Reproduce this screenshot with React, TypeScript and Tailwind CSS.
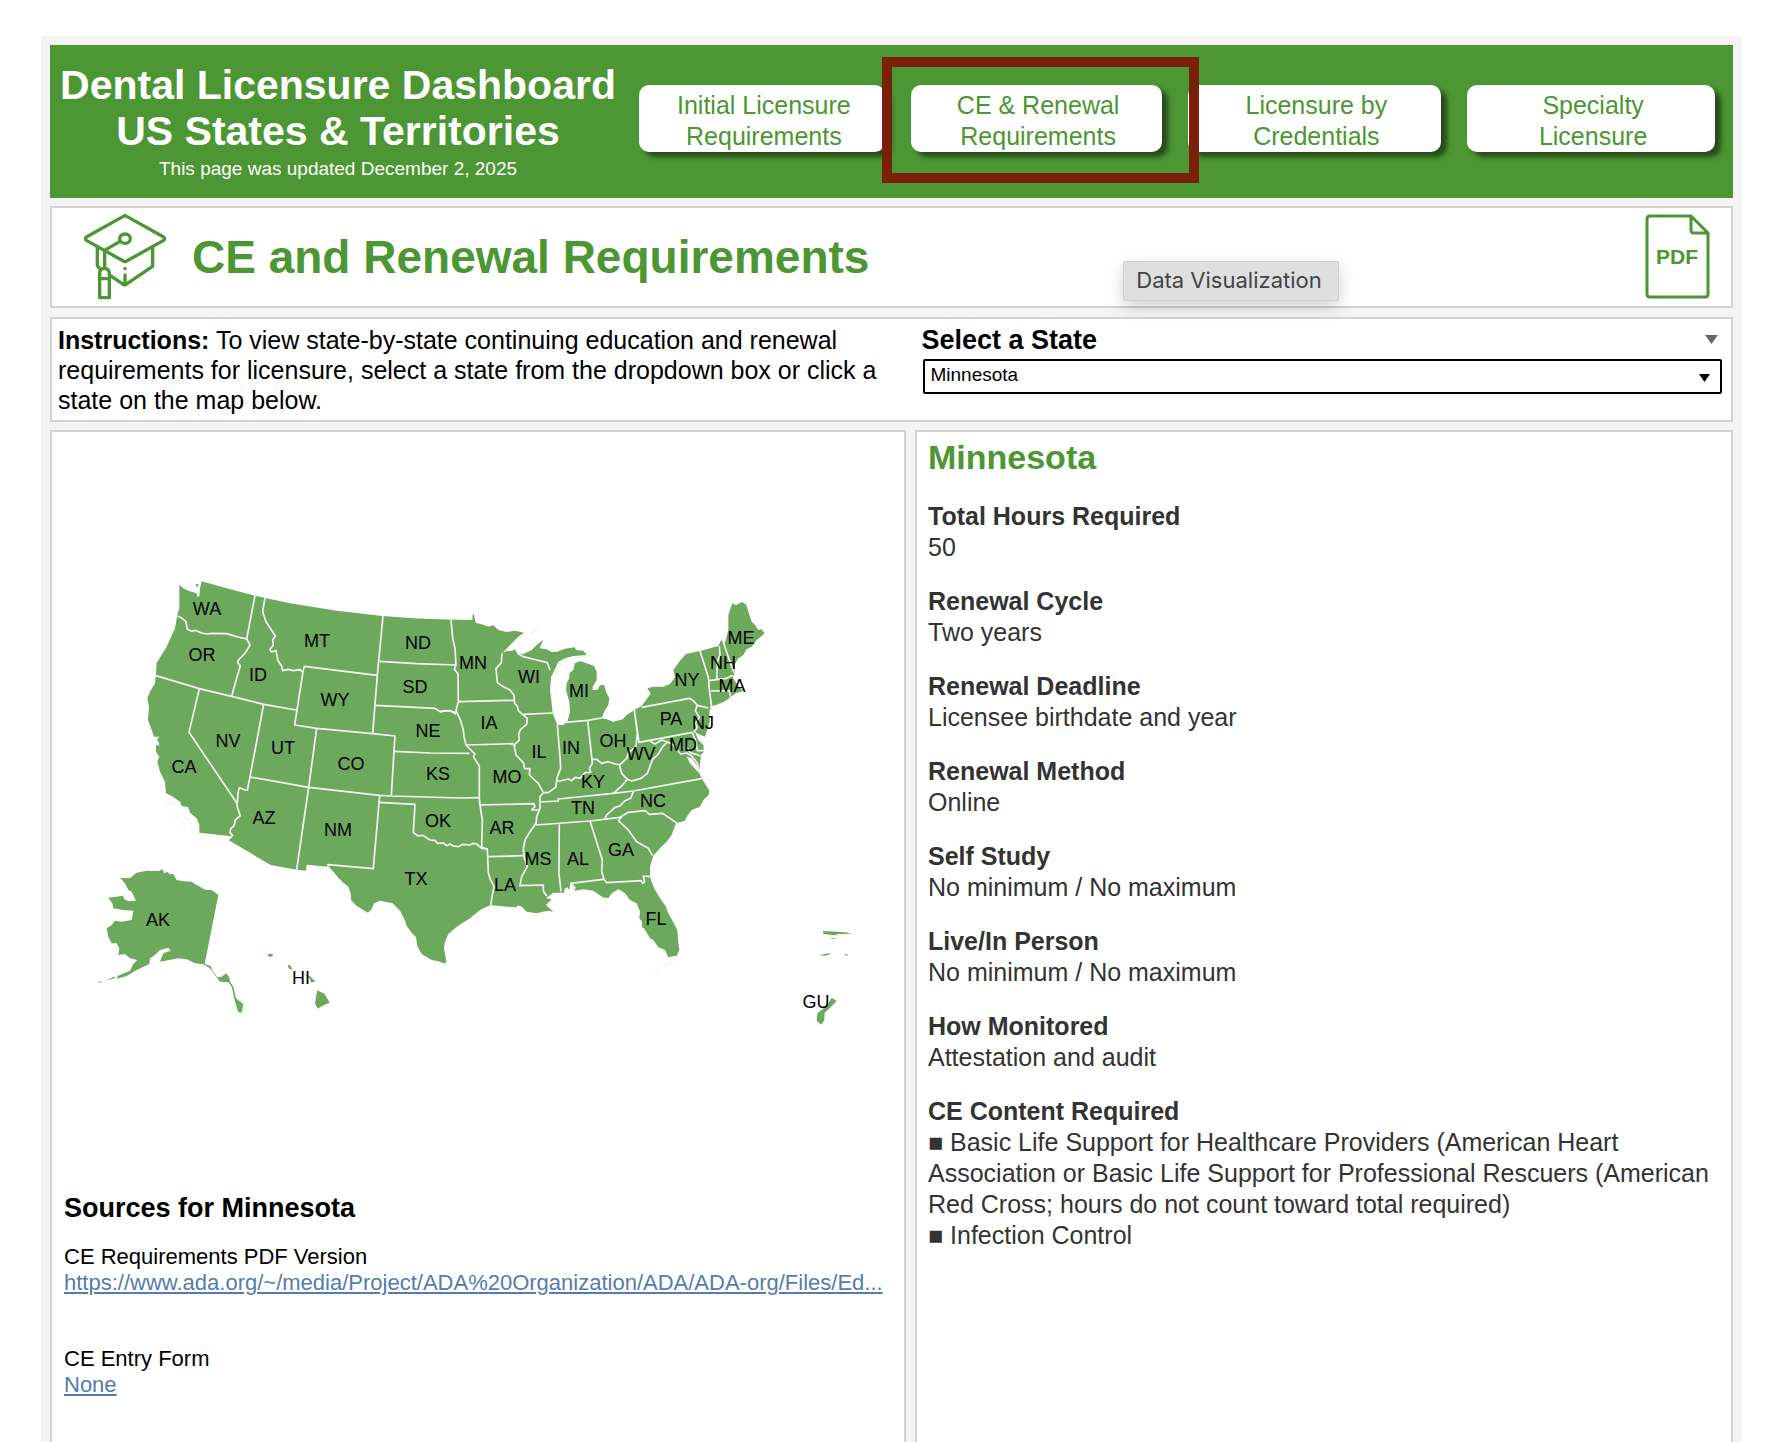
import { useState } from 'react';

const stateLabels: [string, number, number][] = [
  ['WA', 207, 615], ['OR', 202, 661], ['ID', 258, 681], ['MT', 317, 647], ['ND', 418, 649],
  ['SD', 415, 693], ['WY', 335, 706], ['NE', 428, 737], ['NV', 228, 747], ['UT', 283, 754],
  ['CO', 351, 770], ['KS', 438, 780], ['CA', 184, 773], ['AZ', 264, 824], ['NM', 338, 836],
  ['OK', 438, 827], ['TX', 416, 885], ['MN', 473, 669], ['WI', 529, 683], ['MI', 579, 697],
  ['IA', 489, 729], ['IL', 539, 758], ['IN', 571, 754], ['OH', 613, 747], ['PA', 671, 725],
  ['NY', 687, 686], ['ME', 741, 644], ['NH', 723, 669], ['MA', 732, 692], ['NJ', 703, 729],
  ['MD', 683, 751], ['WV', 641, 760], ['MO', 507, 783], ['KY', 593, 788], ['NC', 653, 807],
  ['TN', 583, 814], ['AR', 502, 834], ['MS', 538, 865], ['AL', 578, 865], ['GA', 621, 856],
  ['LA', 505, 891], ['FL', 656, 925], ['AK', 158, 926], ['HI', 301, 984], ['GU', 816, 1008],
];

const westBorders = [
  '143,168 155,174 168,185 172,208 185,214 195,211 215,219 230,222 245,220 290,221 320,230 350,237',
  '375,107 350,237 360,255 345,280 325,300 323,308 331,317 320,355 305,409',
  '78,347 208,386 305,409 401,433 499,450',
  '405,114 398,155 408,185 420,203 436,228 428,240 430,255 420,268 424,276 438,272 444,302 455,318 458,332 475,328 490,332 510,329 519,338',
  '519,335 523,319 742,346',
  '519,335 494,495 560,505 728,521 795,528 792,574 784,706',
  '759,168 742,346 728,521',
  '749,304 860,311 978,315',
  '737,436 915,445 932,456 945,452 965,454 978,463',
  '792,574 900,579 1018,580',
  '560,505 536,682 500,929',
  '360,651 536,682 749,706 784,708 990,714 1048,713',
  '401,433 360,651 352,690 345,690 328,683 324,700 322,730',
  '208,386 177,517 320,728 323,745 331,767 316,780 312,798 302,806 300,818 308,826 303,832 295,838',
  '749,706 730,926 594,914 594,920',
  '747,727 855,733 850,817 862,827 880,827 900,840 915,841 922,850 940,849 950,857 960,852 970,858 985,860 998,853 1020,855 1030,850 1040,852 1055,865 1072,867',
];

const eastBorders = [
  '33,89 38,145 45,175 48,225 43,238 54,252 55,335 48,362 62,392 70,420 72,440 78,465 105,492 100,500 118,528 118,623 120,645 127,690 125,772 142,777 145,850 152,870 162,890 158,910 152,945',
  '54,335 222,331',
  '80,465 218,461 226,469',
  '0,364 25,362 48,368',
  '186,190 184,218 168,236 172,278 190,290 210,300 222,316 224,340 232,348 235,362 248,374 262,385 260,403 242,418 236,432 238,450 222,465 228,495 250,518 254,536 270,536 268,555 295,580 310,608 300,620 300,655 290,680 288,700 270,725 255,750 250,775 252,800 262,830 245,860 240,887 310,885 310,903 320,918',
  '250,373 338,369',
  '232,190 250,200 290,210 322,218 330,240',
  '352,404 360,500 362,535 352,560 347,592 325,608 312,608',
  '443,391 455,500 457,520 448,535 452,547 435,548 420,565 405,562 395,572 385,567 360,573 350,573',
  '375,397 443,391 485,384',
  '455,508 470,508 485,520 505,515 525,522 538,524',
  '538,526 560,505 565,490 588,468 592,430 583,360 597,457 757,427',
  '605,352 748,325 760,332 772,346 805,354',
  '772,346 766,362 778,382 766,400 772,412 762,427',
  '780,183 805,262 808,300 815,350',
  '838,168 840,195 832,215 830,268',
  '848,150 868,210 882,248',
  '806,272 860,265 878,256',
  '812,303 868,302 872,322',
  '300,636 355,633 355,627 520,610 580,603 785,566',
  '520,610 545,588 562,568 545,550 538,524',
  '562,568 575,573 603,565 622,550 638,508 655,492 668,470 682,456 665,450 645,462 633,455 630,450',
  '682,456 700,464 715,484 722,492 740,489 755,498 772,520 777,545',
  '757,427 768,455 772,482 792,482',
  '740,470 750,488 768,493 782,498',
  '580,605 572,625 555,632 540,648 525,652 500,675 495,685',
  '288,705 450,693 540,682',
  '120,645 282,641 285,650 275,660 298,660',
  '358,703 357,850 363,905',
  '450,693 487,810 485,845 492,868 500,878 604,872 608,880 614,876 610,858 630,860',
  '400,905 405,893 392,880 490,868',
  '545,680 535,692 565,720 590,755 625,775 638,797',
  '540,682 565,667 615,662 628,673 668,670 710,699',
  '145,800 250,797',
];

const details = [
  { title: 'Total Hours Required', lines: ['50'] },
  { title: 'Renewal Cycle', lines: ['Two years'] },
  { title: 'Renewal Deadline', lines: ['Licensee birthdate and year'] },
  { title: 'Renewal Method', lines: ['Online'] },
  { title: 'Self Study', lines: ['No minimum / No maximum'] },
  { title: 'Live/In Person', lines: ['No minimum / No maximum'] },
  { title: 'How Monitored', lines: ['Attestation and audit'] },
  {
    title: 'CE Content Required',
    lines: [
      '■ Basic Life Support for Healthcare Providers (American Heart Association or Basic Life Support for Professional Rescuers (American Red Cross; hours do not count toward total required)',
      '■ Infection Control',
    ],
  },
];

function NavButton({ top, bottom }: { top: string; bottom: string }) {
  return (
    <button className="h-[67px] w-full rounded-[10px] bg-white pt-1 pl-1 text-[25px] leading-[31px] text-[#4c9633] shadow-[6px_5px_5px_rgba(0,0,0,0.5)]">
      {top}
      <br />
      {bottom}
    </button>
  );
}

function CapIcon() {
  return (
    <svg
      viewBox="36 21 258 270"
      className="h-[90px] w-[86px] shrink-0"
      fill="none"
      stroke="#4c9633"
      strokeWidth="10"
      strokeLinejoin="round"
      strokeLinecap="round"
    >
      <path d="M160 34q5-4 10 0l111 62q5 5 0 10l-111 62q-5 4-10 0L49 106q-5-5 0-10z" />
      <ellipse cx="165" cy="101" rx="16" ry="14" />
      <path d="M150 109l-46 27v53M82 124v58l6 8M248 124v60l-80 54q-4 3-8 0l-40-27M165 210v26M165 190v1" />
      <path d="M89 278v-72q0-16 14-16t15 16v72zM89 221h29" />
    </svg>
  );
}

function PdfIcon() {
  return (
    <svg viewBox="0 0 65 85" className="mb-[2px] h-[85px] w-[65px]">
      <path
        d="M46 2H5Q2 2 2 5v75q0 3 3 3h55q3 0 3-3V19zM46 2v14q0 3 3 3h14"
        fill="none"
        stroke="#4c9633"
        strokeWidth="3"
        strokeLinejoin="round"
      />
      <text x="32" y="50" textAnchor="middle" className="fill-[#4c9633] text-[21px] font-bold">
        PDF
      </text>
    </svg>
  );
}

function StateMap() {
  return (
    <svg viewBox="52 432 852 740" className="block w-full" role="img" aria-label="Map of US states and territories">
      <g className="fill-[#6ca95c]">
        <path
          transform="translate(130 560) scale(.33333)"
          d="M148 75L160 85 175 92 190 97 200 100 202 110 208 108 210 85 215 64 290 85 375 107 480 130 620 152 757 168 850 175 960 179 1020 180 1020 880 594 920 530 914 528 932 500 929 422 915 295 840 305 829 208 818 208 795 200 775 180 758 175 742 155 738 150 725 125 708 108 700 105 665 90 635 82 605 88 590 78 575 78 555 88 557 86 545 80 540 88 530 72 530 65 510 54 480 57 440 52 415 60 395 75 370 78 340 80 308 95 285 110 260 135 205 142 165 148 145zM198 73l8-2-2 8-5 2z"
        />
        <path
          transform="translate(300 780) scale(.33333)"
          d="M20 253L85 258 100 275 115 293 130 308 145 320 152 340 153 360 170 378 190 390 204 398 215 388 222 370 240 362 278 370 300 392 312 415 320 437 335 458 348 472 352 498 365 522 395 540 415 544 434 551 439 545 432 505 434 488 445 462 470 440 510 415 540 390 570 376 590 340 590 100 20 100z"
        />
        <path
          transform="translate(440 590) scale(.33333)"
          d="M-20 89L33 89 97 90 98 72 102 74 107 98 130 104 145 110 160 106 175 120 200 126 225 122 252 128 235 140 205 170 188 188 200 183 215 183 225 178 232 190 250 193 275 180 290 165 310 150 305 162 298 175 320 178 335 186 350 186 375 176 405 172 408 180 430 182 440 195 400 198 375 205 355 215 348 230 335 258 322 278 328 268 333 262 330 300 335 340 338 370 345 388 352 404 370 405 383 392 390 365 388 335 378 300 380 280 388 265 388 250 400 240 405 220 420 213 440 220 462 228 470 245 470 270 458 290 458 300 472 300 480 286 492 284 500 310 508 325 505 345 495 360 485 385 500 388 520 395 548 388 560 375 583 360 605 348 625 320 632 312 622 295 640 290 670 290 690 282 705 262 700 240 720 212 738 192 780 183 835 168 842 152 848 150 855 158 865 120 865 75 877 40 888 46 905 36 918 43 935 95 945 105 955 120 965 118 974 130 950 150 935 170 920 178 910 195 895 205 885 222 884 250 878 262 892 285 905 300 915 293 905 305 890 308 880 315 860 330 840 343 815 352 808 362 809 395 800 425 795 440 775 432 765 425 775 450 790 465 792 485 784 492 780 520 778 545 770 525 755 505 740 500 750 520 778 550 785 565 808 602 806 615 790 630 780 650 755 660 740 680 735 692 708 700 695 735 680 755 660 775 640 797 630 830 630 860 640 890 660 925 678 950 683 965 712 1020 715 1060 718 1080 710 1097 685 1102 675 1080 655 1072 640 1050 630 1045 612 1015 606 1012 606 995 598 985 600 965 590 940 570 930 555 910 535 898 515 910 505 925 488 922 460 902 430 898 402 903 398 885 390 883 388 900 382 892 374 896 372 908 340 908 318 925 335 928 318 945 340 965 325 962 310 965 290 970 260 965 245 950 235 946 228 952 200 950 150 945 130 720 -20 720z"
        />
        <path
          transform="translate(80 840) scale(.33333)"
          d="M120 113L150 115 162 104 170 98 200 92 235 93 248 88 252 100 262 96 270 103 280 102 290 120 310 124 335 125 345 132 375 149 395 150 415 165 374 372 392 378 398 392 412 412 425 410 438 400 448 412 450 425 460 440 468 475 490 492 485 518 475 516 465 485 455 440 445 427 420 425 405 405 390 385 370 373 345 370 320 358 295 355 240 365 250 340 272 332 265 323 240 330 225 345 210 355 208 372 170 390 140 408 112 416 112 408 150 392 160 372 172 360 150 355 135 342 115 345 118 325 110 310 95 310 85 290 80 265 95 255 105 242 125 245 155 240 160 212 130 210 100 205 97 190 85 173 130 167 132 177 145 184 168 182 155 155 145 150 135 130zM50 427l15-4v4zM80 421l20-10 8 2-14 5zM563 343l14-2 2 7-12 3zM623 377l7-3 8 15-11-3zM672 401l18 8 17 16-14 2-4-12zM712 451l22 11 15 26-21 9-15 9-8-16 4-25z"
        />
        <path
          transform="translate(780 900) scale(.33333)"
          d="M129 93l40 2 28 2 18 4-40 1-10 4-35-4zM150 114l22 1-15 2zM117 166l30-6 5 3-18 4zM192 165l8-3 5 3-8 2zM155 293l15 10-18 19-18 16-1 22-9 14-14-12 2-22 16-12 16-16z"
        />
      </g>
      <g fill="none" stroke="#f5f5f5" strokeWidth="5" strokeLinejoin="round">
        <g transform="translate(130 560) scale(.33333)">
          {westBorders.map((points) => (
            <polyline key={points} points={points} />
          ))}
        </g>
        <g transform="translate(440 590) scale(.33333)">
          {eastBorders.map((points) => (
            <polyline key={points} points={points} />
          ))}
          {/* lake and coast outlines */}
          <path d="M270 132L297 116M345 250Q365 215 385 212M405 202L455 197M810 352Q845 345 880 325M905 308L930 300M645 1140L680 1125 712 1100" />
        </g>
        <path d="M164 801l13 4M171 815l3 2M184 816l4 4M182 822l3 4M260 957l3-2" strokeWidth="2" />
      </g>
      {stateLabels.map(([name, x, y]) => (
        <text key={name} x={x} y={y} textAnchor="middle" className="fill-black text-[18px]">
          {name}
        </text>
      ))}
    </svg>
  );
}

function SourceLink({ label, text }: { label: string; text: string }) {
  return (
    <div className="text-[22px] leading-[26px]">
      <p>{label}</p>
      <a href="#" className="block overflow-hidden whitespace-nowrap text-[#557cab] underline">
        {text}
      </a>
    </div>
  );
}

function App() {
  const [selected, setSelected] = useState('Minnesota');

  return (
    <div className="flex min-h-screen flex-col bg-white pt-9 pr-[42px] pl-[41px] font-['Liberation_Sans',Arial,sans-serif] text-black">
      <main className="flex grow flex-col bg-[#f4f4f4] px-[9px] pt-[9px]">
        <header className="flex h-[153px] bg-[#4c9633] pr-[18px]">
          <div className="w-[576px] shrink-0 pt-[17px] text-center text-white">
            <h1 className="text-[41px] leading-[46px] font-bold">
              Dental Licensure Dashboard
              <br />
              US States &amp; Territories
            </h1>
            <p className="text-[19px] leading-[30px]">This page was updated December 2, 2025</p>
          </div>
          <nav className="ml-[13px] grid grow grid-cols-[246fr_251fr_254fr_248fr] gap-[26px] pt-10">
            <NavButton top="Initial Licensure" bottom="Requirements" />
            <div className="relative">
              <NavButton top="CE & Renewal" bottom="Requirements" />
              <div className="pointer-events-none absolute -top-7 -right-[37px] -left-[29px] z-10 h-[126px] border-10 border-[#7a1f0a]"></div>
            </div>
            <NavButton top="Licensure by" bottom="Credentials" />
            <NavButton top="Specialty" bottom="Licensure" />
          </nav>
        </header>

        <section className="relative mt-2 flex h-[102px] items-center border-2 border-[#d3d3d3] bg-white pr-[21px] pl-[30px]">
          <CapIcon />
          <h2 className="ml-6 text-[46px] font-bold text-[#4c9633]">CE and Renewal Requirements</h2>
          <button className="ml-auto" aria-label="Download PDF">
            <PdfIcon />
          </button>
          <div
            role="tooltip"
            className="absolute top-[53px] left-[1071px] flex h-10 w-[216px] items-center justify-center rounded-xs border border-[#d0d0d0] bg-[#dfdfdf] pr-1 pb-[2px] font-[Inter,sans-serif] text-[22px] text-[#444] shadow-[0_6px_16px_rgba(0,0,0,0.18)]"
          >
            Data Visualization
          </div>
        </section>

        <section className="mt-[9px] grid h-[105px] grid-cols-[870fr_810fr] border-2 border-[#d3d3d3] bg-white">
          <p className="pt-[6px] pr-2 pl-[6px] text-[25px] leading-[30px]">
            <b>Instructions:</b> To view state-by-state continuing education and renewal requirements for licensure, select
            a state from the dropdown box or click a state on the map below.
          </p>
          <div className="pr-[9px]">
            <div className="flex h-10 items-center justify-between pr-1">
              <label htmlFor="state" className="pt-[2px] text-[27px] font-bold">
                Select a State
              </label>
              <svg viewBox="0 0 13 9" className="h-[9px] w-[13px] fill-[#666]">
                <path d="M0 0h13L6.5 9z" />
              </svg>
            </div>
            <div className="relative ml-[2px]">
              <select
                id="state"
                value={selected}
                onChange={(e) => setSelected(e.target.value)}
                className="block h-[35px] w-full appearance-none rounded-xs border-2 border-black bg-white pb-1 pl-[5px] text-[19px]"
              >
                <option>Minnesota</option>
              </select>
              <svg viewBox="0 0 11 8" className="pointer-events-none absolute top-[15px] right-3 h-2 w-[11px] fill-black">
                <path d="M0 0h11L5.5 8z" />
              </svg>
            </div>
          </div>
        </section>

        <div className="mt-2 grid grow grid-cols-[856fr_818fr] gap-[9px]">
          <section className="min-w-0 border-2 border-b-0 border-[#d3d3d3] bg-white">
            <StateMap />
            <div className="pt-[19px] pr-[7px] pl-3">
              <h3 className="mb-[19px] text-[27px] leading-[34px] font-bold">Sources for {selected}</h3>
              <div className="flex flex-col gap-[50px]">
                <SourceLink
                  label="CE Requirements PDF Version"
                  text="https://www.ada.org/~/media/Project/ADA%20Organization/ADA/ADA-org/Files/Ed..."
                />
                <SourceLink label="CE Entry Form" text="None" />
              </div>
            </div>
          </section>

          <section className="min-w-0 border-2 border-b-0 border-[#d3d3d3] bg-white pt-[5px] pr-4 pl-[11px] text-[25px] leading-[31px] text-[#333]">
            <h2 className="mb-[24px] text-[34px] leading-10 font-bold text-[#4c9633]">{selected}</h2>
            <div className="flex flex-col gap-[23px]">
              {details.map(({ title, lines }) => (
                <div key={title}>
                  <h3 className="font-bold">{title}</h3>
                  {lines.map((line) => (
                    <p key={line}>{line}</p>
                  ))}
                </div>
              ))}
            </div>
          </section>
        </div>
      </main>
    </div>
  );
}

export default App;
